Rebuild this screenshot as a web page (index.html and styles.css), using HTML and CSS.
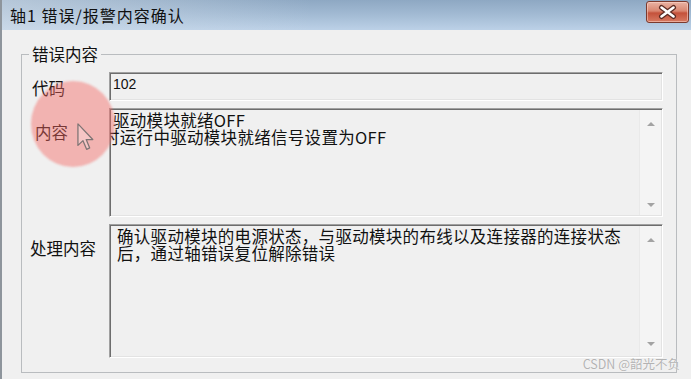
FILE: index.html
```html
<!DOCTYPE html>
<html lang="zh-CN">
<head>
<meta charset="utf-8">
<title>轴1 错误/报警内容确认</title>
<link rel="stylesheet" href="styles.css">
</head>
<body>
<div class="window">
  <div class="titlebar">
    <span class="title">轴1 错误/报警内容确认</span>
    <div class="close">
      <svg width="43" height="22" viewBox="0 0 43 22">
        <path d="M15.5 6.5 L27.5 15.5 M27.5 6.5 L15.5 15.5" stroke="#5a2a22" stroke-width="5" stroke-linecap="round"/>
        <path d="M15.5 6.5 L27.5 15.5 M27.5 6.5 L15.5 15.5" stroke="#ffffff" stroke-width="2.6" stroke-linecap="round"/>
      </svg>
    </div>
  </div>
  <div class="client">
    <fieldset class="group">
      <legend class="legend">错误内容</legend>
      <div class="form">
        <div class="label label-code">代码</div>
        <div class="field field-code"><div class="text code">102</div></div>

        <div class="label label-content">内容</div>
        <div class="field field-content">
          <div class="text">
            <div class="line line-first">驱动模块就绪OFF</div>
            <div class="line line-second">时运行中驱动模块就绪信号设置为OFF</div>
          </div>
          <div class="scrollbar scroll-content"><span class="arrow up"></span><span class="arrow down"></span></div>
        </div>

        <div class="label label-handle">处理内容</div>
        <div class="field field-handle">
          <div class="text">
            <div class="line">确认驱动模块的电源状态，与驱动模块的布线以及连接器的连接状态</div>
            <div class="line">后，通过轴错误复位解除错误</div>
          </div>
          <div class="scrollbar scroll-handle"><span class="arrow up"></span><span class="arrow down"></span></div>
        </div>
      </div>
    </fieldset>
  </div>
  <div class="spot"></div>
  <svg class="cursor" width="17" height="28" viewBox="0 0 12 20">
    <path d="M0.6 0.6 L0.6 16 L4.2 12.6 L6.8 18.8 L9 17.8 L6.5 11.8 L11.2 11.8 Z" fill="rgba(255,235,235,0.35)" stroke="#7e7474" stroke-width="0.9" stroke-linejoin="round"/>
  </svg>
  <div class="watermark">CSDN @韶光不负</div>
</div>
</body>
</html>
```
FILE: styles.css
```css
html, body {
  margin: 0;
  padding: 0;
}
body {
  width: 691px;
  height: 379px;
  overflow: hidden;
  background: #f0f0f0;
  font-family: "Noto Sans CJK SC", "Noto Sans", "Liberation Sans", sans-serif;
  color: #111;
}
.window {
  position: relative;
  height: 379px;
  border-left: 2px solid #8e959c;
  box-sizing: border-box;
  background: #f0f0f0;
}
.titlebar {
  height: 30px;
  display: flex;
  align-items: center;
  justify-content: space-between;
  padding: 0 2px 0 8px;
  background:
    linear-gradient(90deg, rgba(214,224,234,0.55), rgba(214,224,234,0) 45%),
    linear-gradient(180deg, #8ea8c3 0%, #a3bbd4 50%, #bcd1e7 100%);
}
.title {
  font-size: 16px;
  letter-spacing: 1px;
  line-height: 20px;
  color: #101010;
}
.close {
  width: 43px;
  height: 22px;
  margin-top: -6px;
  border-radius: 3px;
  box-sizing: border-box;
  border: 1px solid #7b3a2e;
  background: linear-gradient(180deg, #e9b3a4 0%, #d98670 45%, #c4523b 55%, #d77a62 100%);
  box-shadow: inset 0 0 0 1px rgba(255,220,210,0.5);
  display: flex;
  align-items: center;
  justify-content: center;
}
.close svg {
  display: block;
  margin: -1px;
}
.client {
  padding: 14px 14px 0 19px;
}
.group {
  margin: 0;
  border: 1px solid #b9bcbf;
  padding: 8px 13px 14px 10px;
  min-width: 0;
}
.legend {
  font-size: 16.5px;
  line-height: 20px;
  padding: 0 3px;
  margin-left: -3px;
  color: #111;
}
.form {
  display: grid;
  grid-template-columns: 77px 554px;
  grid-template-rows: 29px 109px 134px;
  row-gap: 7px;
}
.label {
  font-size: 16.5px;
  line-height: 20px;
  color: #111;
}
.label-code { padding-top: 6px; }
.label-content { padding-top: 14px; padding-left: 3px; }
.label-handle { padding-top: 14px; margin-left: -2px; }
.field {
  display: flex;
  box-sizing: border-box;
  border-top: 1px solid #a0a0a0;
  border-left: 1px solid #a0a0a0;
  border-bottom: 1px solid #ffffff;
  border-right: 1px solid #ffffff;
  box-shadow: inset 1px 1px 0 #6d6d6d, inset -1px -1px 0 #e3e3e3;
  background: #f0f0f0;
  overflow: hidden;
}
.text {
  flex: 1;
  min-width: 0;
  overflow: hidden;
  padding: 3px 0 0 7px;
  font-size: 16.5px;
  line-height: 17px;
  letter-spacing: 0.3px;
  white-space: nowrap;
  color: #111;
}
.text.code {
  font-family: "Liberation Sans", sans-serif;
  font-size: 14px;
  padding-top: 3px;
  padding-left: 3px;
  letter-spacing: 0;
}
.line-first { margin-left: -4px; }
.line-second { margin-left: -14px; }
.scrollbar {
  width: 21px;
  display: flex;
  flex-direction: column;
  justify-content: space-between;
  align-items: center;
  background: #f4f4f4;
  border-left: 1px solid #e9e9e9;
  margin: 1px 1px 1px 0;
}
.scroll-content { padding: 12px 0 8px; }
.scroll-handle { padding: 12px 0 10px; }
.arrow {
  width: 0;
  height: 0;
  border-left: 4px solid transparent;
  border-right: 4px solid transparent;
}
.arrow.up { border-bottom: 4px solid #a3a3a3; }
.arrow.down { border-top: 4px solid #a3a3a3; }
.spot {
  position: absolute;
  left: 29px;
  top: 81px;
  width: 84px;
  height: 86px;
  border-radius: 50%;
  background: rgba(243, 105, 100, 0.45);
  filter: blur(1px);
}
.cursor {
  position: absolute;
  left: 75px;
  top: 123px;
}
.watermark {
  position: absolute;
  right: 11px;
  top: 356px;
  font-size: 12.5px;
  line-height: 16px;
  color: #b3b3b3;
  text-shadow: 0 0 1px #ffffff;
}
```
